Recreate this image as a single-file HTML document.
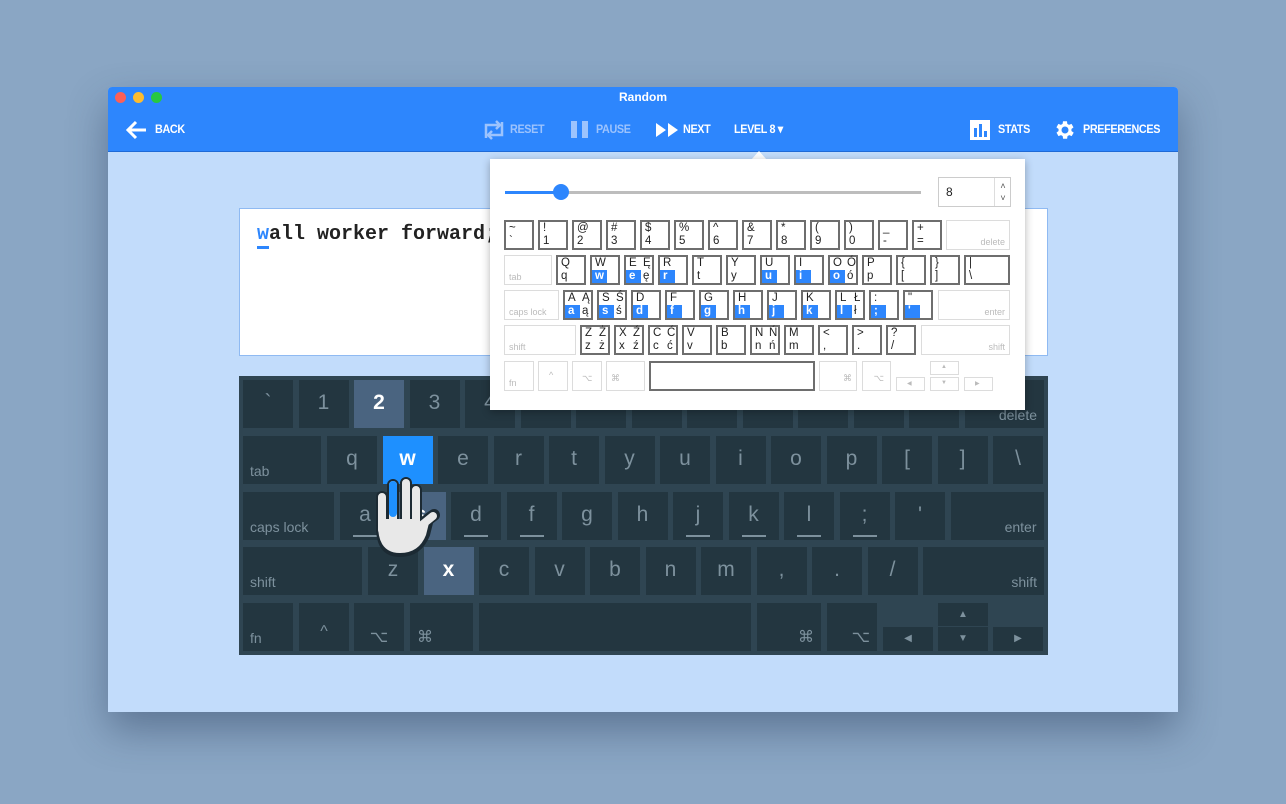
<!DOCTYPE html>
<html><head><meta charset="utf-8">
<style>
*{margin:0;padding:0;box-sizing:border-box}
body{width:1286px;height:804px;background:#8aa6c4;position:relative;overflow:hidden;font-family:"Liberation Sans",sans-serif}
.win{position:absolute;left:108px;top:87px;width:1070px;height:625px;background:#c2dcfb;box-shadow:0 18px 40px rgba(40,60,90,.45);border-radius:4px 4px 0 0;overflow:hidden}
.bar{position:absolute;left:0;top:0;width:1070px;height:65px;background:#2d86fd;border-bottom:1px solid #1f6ad6}
.tl{position:absolute;top:5px;width:11px;height:11px;border-radius:50%}
.title{position:absolute;left:0;width:1070px;top:3px;text-align:center;color:#fff;font-size:12px;font-weight:bold}
.tb{position:absolute;top:35px;color:#fff;font-size:12px;font-weight:bold;letter-spacing:-.4px;transform:scaleX(.9);transform-origin:left}
.fade{color:#9cc3fd}
.tbox{position:absolute;left:131px;top:121px;width:809px;height:148px;background:#fff;border:1px solid #8fbaf2}
.txt{position:absolute;left:17px;top:14px;font-family:"Liberation Mono",monospace;font-size:20px;font-weight:bold;color:#222}
.kb{position:absolute;left:131px;top:289px;width:809px;height:279px;background:#2f4552}
.k{position:absolute;height:48px;width:50px;background:#233640;color:#7d919d;font-size:21px;text-align:center;padding-top:11px}
.k.s{font-size:14px;text-align:left;padding:0 0 0 7px;display:flex;align-items:flex-end;padding-bottom:5px}
.k.r{justify-content:flex-end;padding-right:7px}
.k.h{background:#4a6480;color:#fff;font-weight:bold}
.k.b{background:#1e90ff;color:#fff;font-weight:bold}
.ul:after{content:"";position:absolute;left:13px;right:13px;bottom:3px;height:2px;background:#7d919d}
.pop{position:absolute;left:490px;top:159px;width:535px;height:251px;background:#fff;box-shadow:0 2px 8px rgba(0,0,0,.3)}
.car{position:absolute;left:751px;top:151px;width:0;height:0;border-left:8px solid transparent;border-right:8px solid transparent;border-bottom:9px solid #fff}
.m{position:absolute;height:30px;width:30px;border:2px solid #6e6e6e;font-size:11.5px;color:#222}
.m.i{border:1.5px solid #dcdcdc;color:#bbb;font-size:9px}
.m span{position:absolute}
.t1{left:3px;top:0}.t2{left:3px;top:13px}.u1{left:17px;top:0}.u2{left:17px;top:13px}
.bl{position:absolute;left:0;top:13px;width:15px;height:13px;background:#2d86fd}
.m .w{color:#fff;font-weight:bold}
</style></head><body>
<div class="win">
<div class="bar">
<div class="tl" style="left:7px;background:#fc5f57"></div>
<div class="tl" style="left:25px;background:#fdbc2e"></div>
<div class="tl" style="left:43px;background:#28c840"></div>
<div class="title">Random</div>
<svg style="position:absolute;left:17px;top:33px" width="22" height="20" viewBox="0 0 22 20"><path d="M21 10H3M11 2L3 10l8 8" stroke="#fff" stroke-width="3" fill="none"/></svg>
<div class="tb" style="left:47px">BACK</div>
<svg style="position:absolute;left:374px;top:33px" width="24" height="20" viewBox="0 0 24 20"><path d="M4 18V5h14M14 1l4 4-4 4M20 2v13H6M10 11l-4 4 4 4" stroke="#9cc3fd" stroke-width="2.5" fill="none"/></svg>
<div class="tb fade" style="left:402px">RESET</div>
<div style="position:absolute;left:463px;top:34px;width:6px;height:17px;background:#9cc3fd"></div>
<div style="position:absolute;left:474px;top:34px;width:6px;height:17px;background:#9cc3fd"></div>
<div class="tb fade" style="left:488px">PAUSE</div>
<svg style="position:absolute;left:548px;top:36px" width="23" height="14"><path d="M0 0l10 7-10 7zM12 0l10 7-10 7z" fill="#fff"/></svg>
<div class="tb" style="left:575px">NEXT</div>
<div class="tb" style="left:626px">LEVEL 8 ▾</div>
<svg style="position:absolute;left:862px;top:33px" width="20" height="20"><rect width="20" height="20" fill="#fff"/><rect x="4" y="8" width="3" height="9" fill="#2d86fd"/><rect x="9" y="4" width="3" height="13" fill="#2d86fd"/><rect x="14" y="11" width="3" height="6" fill="#2d86fd"/></svg>
<div class="tb" style="left:890px">STATS</div>
<svg style="position:absolute;left:945px;top:31px" width="24" height="24" viewBox="0 0 24 24"><path fill="#fff" d="M19.4 13a7.5 7.5 0 000-2l2.1-1.6-2-3.5-2.5 1a7 7 0 00-1.7-1L15 3.2h-4l-.4 2.7a7 7 0 00-1.7 1l-2.5-1-2 3.5L6.6 11a7.5 7.5 0 000 2l-2.1 1.6 2 3.5 2.5-1a7 7 0 001.7 1l.4 2.7h4l.4-2.7a7 7 0 001.7-1l2.5 1 2-3.5zM13 15.5a3.5 3.5 0 110-7 3.5 3.5 0 010 7z" transform="translate(-1 0)"/></svg>
<div class="tb" style="left:975px">PREFERENCES</div>
</div>
<div class="tbox"><div class="txt"><span style="color:#2d86fd;border-bottom:3px solid #2d86fd">w</span>all worker forward;</div></div>
<div class="kb">
<div class="k" style="left:4px;top:4px">`</div><div class="k" style="left:59.5px;top:4px">1</div><div class="k h" style="left:115px;top:4px">2</div><div class="k" style="left:170.5px;top:4px">3</div><div class="k" style="left:226px;top:4px">4</div><div class="k" style="left:281.5px;top:4px">5</div><div class="k" style="left:337px;top:4px">6</div><div class="k" style="left:392.5px;top:4px">7</div><div class="k" style="left:448px;top:4px">8</div><div class="k" style="left:503.5px;top:4px">9</div><div class="k" style="left:559px;top:4px">0</div><div class="k" style="left:614.5px;top:4px">-</div><div class="k" style="left:670px;top:4px">=</div><div class="k s r" style="left:726px;top:4px;width:79px">delete</div>
<div class="k s" style="left:4px;top:60px;width:78px">tab</div><div class="k" style="left:88px;top:60px">q</div><div class="k b" style="left:143.5px;top:60px">w</div><div class="k" style="left:199px;top:60px">e</div><div class="k" style="left:254.5px;top:60px">r</div><div class="k" style="left:310px;top:60px">t</div><div class="k" style="left:365.5px;top:60px">y</div><div class="k" style="left:421px;top:60px">u</div><div class="k" style="left:476.5px;top:60px">i</div><div class="k" style="left:532px;top:60px">o</div><div class="k" style="left:587.5px;top:60px">p</div><div class="k" style="left:643px;top:60px">[</div><div class="k" style="left:698.5px;top:60px">]</div><div class="k" style="left:754px;top:60px">\</div>
<div class="k s" style="left:4px;top:116px;width:91px">caps lock</div><div class="k ul" style="left:101px;top:116px">a</div><div class="k h" style="left:156.5px;top:116px">s</div><div class="k ul" style="left:212px;top:116px">d</div><div class="k ul" style="left:267.5px;top:116px">f</div><div class="k" style="left:323px;top:116px">g</div><div class="k" style="left:378.5px;top:116px">h</div><div class="k ul" style="left:434px;top:116px">j</div><div class="k ul" style="left:489.5px;top:116px">k</div><div class="k ul" style="left:545px;top:116px">l</div><div class="k ul" style="left:600.5px;top:116px">;</div><div class="k" style="left:656px;top:116px">'</div><div class="k s r" style="left:711.5px;top:116px;width:93px">enter</div>
<div class="k s" style="left:4px;top:171px;width:119px">shift</div><div class="k" style="left:129px;top:171px">z</div><div class="k h" style="left:184.5px;top:171px">x</div><div class="k" style="left:240px;top:171px">c</div><div class="k" style="left:295.5px;top:171px">v</div><div class="k" style="left:351px;top:171px">b</div><div class="k" style="left:406.5px;top:171px">n</div><div class="k" style="left:462px;top:171px">m</div><div class="k" style="left:517.5px;top:171px">,</div><div class="k" style="left:573px;top:171px">.</div><div class="k" style="left:628.5px;top:171px">/</div><div class="k s r" style="left:684px;top:171px;width:121px">shift</div>
<div class="k s" style="left:4px;top:227px">fn</div><div class="k" style="left:60px;top:227px;font-size:16px;padding-top:20px">^</div><div class="k" style="left:115px;top:227px;font-size:16px;padding-top:24px">⌥</div><div class="k" style="left:171px;top:227px;width:63px;font-size:16px;padding-top:24px;text-align:left;padding-left:7px">⌘</div><div class="k" style="left:240px;top:227px;width:272px"></div><div class="k" style="left:518px;top:227px;width:64px;font-size:16px;padding-top:24px;text-align:right;padding-right:7px">⌘</div><div class="k" style="left:588px;top:227px;font-size:16px;padding-top:24px;text-align:right;padding-right:7px">⌥</div>
<div class="k" style="left:644px;top:251px;height:24px;font-size:10px;padding-top:6px">◀</div><div class="k" style="left:699px;top:227px;height:23px;font-size:10px;padding-top:6px">▲</div><div class="k" style="left:699px;top:251px;height:24px;font-size:10px;padding-top:6px">▼</div><div class="k" style="left:754px;top:251px;height:24px;font-size:10px;padding-top:6px">▶</div>
</div>
</div>
<svg style="position:absolute;left:370px;top:475px" width="80" height="85" viewBox="0 0 80 85">
<g stroke="#1c2a33" stroke-width="12" stroke-linecap="round" fill="none"><path d="M12 22V55M23 10V45M36 8V45M46 15V50M40 58L64 40"/></g>
<path d="M8 52Q8 80 30 80Q50 80 58 60L62 44Q66 38 60 38Q56 40 50 50V46H10z" fill="#1c2a33" stroke="#1c2a33" stroke-width="4"/>
<g stroke="#e8e8e8" stroke-width="8" stroke-linecap="round" fill="none"><path d="M12 22V55M23 10V45M36 8V45M46 15V50M42 58L63 41"/></g>
<path d="M8 50Q8 78 30 78Q49 78 56 60L60 44Q60 40 56 42L48 52V44H8z" fill="#e8e8e8"/>
<path d="M23 10V38" stroke="#1e90ff" stroke-width="8" stroke-linecap="round"/>
</svg>
<div class="car"></div>
<div class="pop">
<div style="position:absolute;left:15px;top:32px;width:416px;height:3px;background:#bdbdbd"></div>
<div style="position:absolute;left:15px;top:32px;width:56px;height:3px;background:#2d86fd"></div>
<div style="position:absolute;left:63px;top:25px;width:16px;height:16px;border-radius:50%;background:#2d86fd"></div>
<div style="position:absolute;left:448px;top:18px;width:73px;height:30px;border:1px solid #ccc;font-size:12px;padding:7px 0 0 7px;color:#222">8<span style="position:absolute;left:55px;top:0;height:28px;border-left:1px solid #ddd;width:17px;font-size:9px;color:#555;text-align:center;line-height:12px;padding-top:2px">˄<br>˅</span></div>
<div class="m" style="left:14px;top:61px"><span class="t1">~</span><span class="t2">`</span></div>
<div class="m" style="left:48px;top:61px"><span class="t1">!</span><span class="t2">1</span></div>
<div class="m" style="left:82px;top:61px"><span class="t1">@</span><span class="t2">2</span></div>
<div class="m" style="left:116px;top:61px"><span class="t1">#</span><span class="t2">3</span></div>
<div class="m" style="left:150px;top:61px"><span class="t1">$</span><span class="t2">4</span></div>
<div class="m" style="left:184px;top:61px"><span class="t1">%</span><span class="t2">5</span></div>
<div class="m" style="left:218px;top:61px"><span class="t1">^</span><span class="t2">6</span></div>
<div class="m" style="left:252px;top:61px"><span class="t1">&amp;</span><span class="t2">7</span></div>
<div class="m" style="left:286px;top:61px"><span class="t1">*</span><span class="t2">8</span></div>
<div class="m" style="left:320px;top:61px"><span class="t1">(</span><span class="t2">9</span></div>
<div class="m" style="left:354px;top:61px"><span class="t1">)</span><span class="t2">0</span></div>
<div class="m" style="left:388px;top:61px"><span class="t1">_</span><span class="t2">-</span></div>
<div class="m" style="left:422px;top:61px"><span class="t1">+</span><span class="t2">=</span></div>
<div class="m i" style="left:456px;top:61px;width:64px"><span style="right:4px;bottom:2px">delete</span></div>
<div class="m i" style="left:14px;top:96px;width:48px"><span style="left:4px;bottom:2px">tab</span></div>
<div class="m" style="left:66px;top:96px"><span class="t1">Q</span><span class="t2">q</span></div>
<div class="m" style="left:100px;top:96px"><span class="t1">W</span><div class="bl"></div><span class="t2 w">w</span></div>
<div class="m" style="left:134px;top:96px"><span class="t1">E</span><span class="u1">Ę</span><div class="bl"></div><span class="t2 w">e</span><span class="u2">ę</span></div>
<div class="m" style="left:168px;top:96px"><span class="t1">R</span><div class="bl"></div><span class="t2 w">r</span></div>
<div class="m" style="left:202px;top:96px"><span class="t1">T</span><span class="t2">t</span></div>
<div class="m" style="left:236px;top:96px"><span class="t1">Y</span><span class="t2">y</span></div>
<div class="m" style="left:270px;top:96px"><span class="t1">U</span><div class="bl"></div><span class="t2 w">u</span></div>
<div class="m" style="left:304px;top:96px"><span class="t1">I</span><div class="bl"></div><span class="t2 w">i</span></div>
<div class="m" style="left:338px;top:96px"><span class="t1">O</span><span class="u1">Ó</span><div class="bl"></div><span class="t2 w">o</span><span class="u2">ó</span></div>
<div class="m" style="left:372px;top:96px"><span class="t1">P</span><span class="t2">p</span></div>
<div class="m" style="left:406px;top:96px"><span class="t1">{</span><span class="t2">[</span></div>
<div class="m" style="left:440px;top:96px"><span class="t1">}</span><span class="t2">]</span></div>
<div class="m" style="left:474px;top:96px;width:46px"><span class="t1">|</span><span class="t2">\</span></div>
<div class="m i" style="left:14px;top:131px;width:55px"><span style="left:4px;bottom:2px">caps lock</span></div>
<div class="m" style="left:73px;top:131px"><span class="t1">A</span><span class="u1">Ą</span><div class="bl"></div><span class="t2 w">a</span><span class="u2">ą</span></div>
<div class="m" style="left:107px;top:131px"><span class="t1">S</span><span class="u1">Ś</span><div class="bl"></div><span class="t2 w">s</span><span class="u2">ś</span></div>
<div class="m" style="left:141px;top:131px"><span class="t1">D</span><div class="bl"></div><span class="t2 w">d</span></div>
<div class="m" style="left:175px;top:131px"><span class="t1">F</span><div class="bl"></div><span class="t2 w">f</span></div>
<div class="m" style="left:209px;top:131px"><span class="t1">G</span><div class="bl"></div><span class="t2 w">g</span></div>
<div class="m" style="left:243px;top:131px"><span class="t1">H</span><div class="bl"></div><span class="t2 w">h</span></div>
<div class="m" style="left:277px;top:131px"><span class="t1">J</span><div class="bl"></div><span class="t2 w">j</span></div>
<div class="m" style="left:311px;top:131px"><span class="t1">K</span><div class="bl"></div><span class="t2 w">k</span></div>
<div class="m" style="left:345px;top:131px"><span class="t1">L</span><span class="u1">Ł</span><div class="bl"></div><span class="t2 w">l</span><span class="u2">ł</span></div>
<div class="m" style="left:379px;top:131px"><span class="t1">:</span><div class="bl"></div><span class="t2 w">;</span></div>
<div class="m" style="left:413px;top:131px"><span class="t1">"</span><div class="bl"></div><span class="t2 w">'</span></div>
<div class="m i" style="left:448px;top:131px;width:72px"><span style="right:4px;bottom:2px">enter</span></div>
<div class="m i" style="left:14px;top:166px;width:72px"><span style="left:4px;bottom:2px">shift</span></div>
<div class="m" style="left:90px;top:166px"><span class="t1">Z</span><span class="u1">Ż</span><span class="t2">z</span><span class="u2">ż</span></div>
<div class="m" style="left:124px;top:166px"><span class="t1">X</span><span class="u1">Ź</span><span class="t2">x</span><span class="u2">ź</span></div>
<div class="m" style="left:158px;top:166px"><span class="t1">C</span><span class="u1">Ć</span><span class="t2">c</span><span class="u2">ć</span></div>
<div class="m" style="left:192px;top:166px"><span class="t1">V</span><span class="t2">v</span></div>
<div class="m" style="left:226px;top:166px"><span class="t1">B</span><span class="t2">b</span></div>
<div class="m" style="left:260px;top:166px"><span class="t1">N</span><span class="u1">Ń</span><span class="t2">n</span><span class="u2">ń</span></div>
<div class="m" style="left:294px;top:166px"><span class="t1">M</span><span class="t2">m</span></div>
<div class="m" style="left:328px;top:166px"><span class="t1">&lt;</span><span class="t2">,</span></div>
<div class="m" style="left:362px;top:166px"><span class="t1">&gt;</span><span class="t2">.</span></div>
<div class="m" style="left:396px;top:166px"><span class="t1">?</span><span class="t2">/</span></div>
<div class="m i" style="left:431px;top:166px;width:89px"><span style="right:4px;bottom:2px">shift</span></div>
<div class="m i" style="left:14px;top:202px"><span style="left:4px;bottom:2px">fn</span></div>
<div class="m i" style="left:48px;top:202px"><span style="left:10px;top:8px">^</span></div>
<div class="m i" style="left:82px;top:202px"><span style="left:9px;top:11px">⌥</span></div>
<div class="m i" style="left:116px;top:202px;width:39px"><span style="left:4px;top:11px">⌘</span></div>
<div class="m" style="left:159px;top:202px;width:166px"></div>
<div class="m i" style="left:329px;top:202px;width:38px"><span style="right:4px;top:11px">⌘</span></div>
<div class="m i" style="left:372px;top:202px;width:29px"><span style="right:6px;top:11px">⌥</span></div>
<div class="m i" style="left:406px;top:218px;width:29px;height:14px;font-size:6px"><span style="left:10px;top:2px">◀</span></div>
<div class="m i" style="left:440px;top:202px;width:29px;height:14px;font-size:6px"><span style="left:10px;top:2px">▲</span></div>
<div class="m i" style="left:440px;top:218px;width:29px;height:14px;font-size:6px"><span style="left:10px;top:2px">▼</span></div>
<div class="m i" style="left:474px;top:218px;width:29px;height:14px;font-size:6px"><span style="left:10px;top:2px">▶</span></div>
</div>
</body></html>
